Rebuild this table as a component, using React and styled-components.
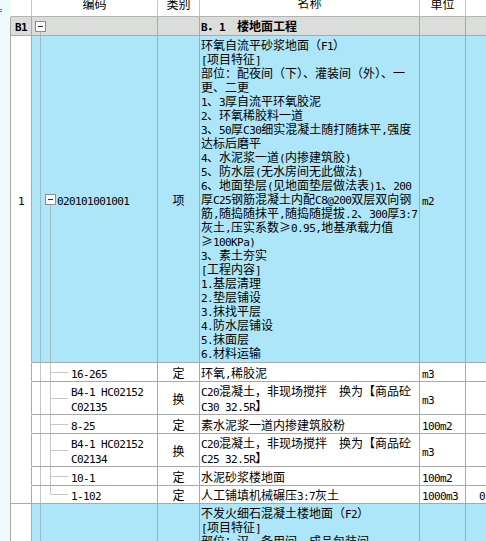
import React from "react";
import styled, { createGlobalStyle } from "styled-components";

const BLUE = "#ade6f8";
const GRAY = "#dbdddb";
const LINE = "#a9a9a9";
const GUIDE = "rgba(150,150,150,0.55)";

const GlobalStyle = createGlobalStyle`
  html, body { margin: 0; padding: 0; background: #fff; }
  body {
    width: 486px; height: 541px; overflow: hidden;
    font-family: "Noto Sans CJK SC", "Noto Sans", sans-serif;
    font-size: 12px; color: #000;
  }
`;

const Page = styled.div`
  display: flex;
  width: 486px;
  height: 541px;
  overflow: hidden;
`;

const Strip = styled.div`
  display: flex;
  flex-direction: column;
  width: 11px;
  flex: none;
  background: #eef9fb;
`;

const StripHead = styled.div`
  box-sizing: border-box;
  height: 17px;
  padding-top: 9px;
`;

const Grip = styled.div`
  width: 2px;
  height: 4px;
  background: repeating-linear-gradient(#6a7078 0 1px, transparent 1px 2px);
`;

const StripBody = styled.div`
  flex: 1;
  border-right: 1px solid #a3abaf;
`;

const Table = styled.div`
  flex: 1;
  min-width: 0;
  display: flex;
  flex-direction: column;
  overflow: hidden;
`;

const Row = styled.div`
  display: flex;
  flex: none;
  min-height: ${(p) => p.$min || 0}px;
  height: ${(p) => (p.$fixed ? `${p.$fixed}px` : "auto")};
`;

const bgFor = (tone) =>
  tone === "group" ? GRAY : tone === "item" ? BLUE : "#fff";

const Cell = styled.div`
  box-sizing: border-box;
  flex: none;
  display: flex;
  align-items: center;
  overflow: hidden;
  white-space: nowrap;
  border-right: 1px solid ${(p) => (p.$tone === "head" ? "#c4c4c4" : LINE)};
  border-bottom: 1px solid
    ${(p) => (p.$open ? "transparent" : p.$tone === "head" ? "#b4b4b4" : LINE)};
  background: ${(p) => bgFor(p.$tone)};
  justify-content: ${(p) => (p.$tone === "head" ? "center" : "flex-start")};
`;

const NumCell = styled(Cell)`
  width: 21px;
  justify-content: center;
  background: ${(p) => (p.$tone === "group" ? GRAY : "#fff")};
  font-weight: ${(p) => (p.$bold ? 700 : 400)};
`;

const guideLayers = {
  group: [`8px 100% / 1px 50%`],
  item: [`8px 0 / 1px 100%`, `18px 100% / 1px 50%`],
  sub: [`8px 0 / 1px 100%`, `18px 0 / 1px 100%`, `19px 50% / 17px 1px`],
  subLast: [`8px 0 / 1px 100%`, `18px 0 / 1px 50%`, `19px 50% / 17px 1px`],
  trunk: [`8px 0 / 1px 100%`],
};

const guides = (kind, tone) => {
  const layers = (guideLayers[kind] || []).map(
    (l) => `linear-gradient(${GUIDE}, ${GUIDE}) ${l} no-repeat`
  );
  return [...layers, bgFor(tone)].join(", ");
};

const CodeCell = styled(Cell)`
  width: 126px;
  padding-left: ${(p) => p.$indent || 0}px;
  background: ${(p) => guides(p.$guide, p.$tone)};
`;

const TypeCell = styled(Cell)`
  width: 42px;
  justify-content: center;
`;

const NameCell = styled(Cell)`
  width: 220px;
  padding: ${(p) => (p.$top ? "2px 1px" : "1px 1px")};
  align-items: ${(p) => (p.$top ? "flex-start" : "center")};
  justify-content: ${(p) => (p.$tone === "head" ? "center" : "flex-start")};
  font-weight: ${(p) => (p.$bold ? 700 : 400)};
`;

const UnitCell = styled(Cell)`
  width: 46px;
  padding-left: ${(p) => (p.$tone === "head" ? 0 : 2)}px;
`;

const ExtraCell = styled(Cell)`
  flex: 1;
  border-right: none;
  padding-left: 13px;
`;

const HeadLabel = styled.span`
  align-self: flex-end;
  line-height: 14px;
  padding-bottom: 5px;
`;

const Toggle = styled.span`
  box-sizing: border-box;
  flex: none;
  width: 11px;
  height: 11px;
  border: 1px solid #8e8e8e;
  background: #fafafa;
  display: inline-flex;
  align-items: center;
  justify-content: center;
  margin-right: ${(p) => p.$gap || 0}px;
  &::after {
    content: "";
    width: 5px;
    height: 1px;
    background: #303030;
  }
`;

const Lines = styled.div`
  line-height: ${(p) => p.$lh || 15}px;
  white-space: nowrap;
`;

const Line = styled.div`
  height: ${(p) => p.$lh || 15}px;
`;

const Latin = styled.span`
  font-family: "DejaVu Sans Mono", "Liberation Mono", monospace;
  font-size: 11px;
  letter-spacing: -0.6px;
  line-height: 0;
`;

function Mixed({ text }) {
  const parts = text.split(/([\x20-\x7e]+)/);
  return parts.map((p, i) =>
    i % 2 ? <Latin key={i}>{p}</Latin> : <React.Fragment key={i}>{p}</React.Fragment>
  );
}

function TextLines({ lines, lh = 15 }) {
  return (
    <Lines $lh={lh}>
      {lines.map((l, i) => (
        <Line key={i} $lh={lh}>
          <Mixed text={l} />
        </Line>
      ))}
    </Lines>
  );
}

const itemLines = [
  "环氧自流平砂浆地面（F1）",
  "[项目特征]",
  "部位：配夜间（下）、灌装间（外）、一",
  "更、二更",
  "1、3厚自流平环氧胶泥",
  "2、环氧稀胶料一道",
  "3、50厚C30细实混凝土随打随抹平,强度",
  "达标后磨平",
  "4、水泥浆一道(内掺建筑胶)",
  "5、防水层(无水房间无此做法)",
  "6、地面垫层(见地面垫层做法表)1、200",
  "厚C25钢筋混凝土内配C8@200双层双向钢",
  "筋,随捣随抹平,随捣随提拔.2、300厚3:7",
  "灰土,压实系数≥0.95,地基承载力值",
  "≥100KPa)",
  "3、素土夯实",
  "[工程内容]",
  "1.基层清理",
  "2.垫层铺设",
  "3.抹找平层",
  "4.防水层铺设",
  "5.抹面层",
  "6.材料运输",
];

const nextLines = [
  "不发火细石混凝土楼地面（F2）",
  "[项目特征]",
  "部位：汉、备用间、成品包装间",
  "1、面层材料",
];

const subs = [
  { code: ["16-265"], type: "定", name: ["环氧,稀胶泥"], unit: "m3" },
  {
    code: ["B4-1 HC02152", "C02135"],
    type: "换",
    name: ["C20混凝土，非现场搅拌　换为【商品砼", "C30 32.5R】"],
    unit: "m3",
  },
  { code: ["8-25"], type: "定", name: ["素水泥浆一道内掺建筑胶粉"], unit: "100m2" },
  {
    code: ["B4-1 HC02152", "C02134"],
    type: "换",
    name: ["C20混凝土，非现场搅拌　换为【商品砼", "C25 32.5R】"],
    unit: "m3",
  },
  { code: ["10-1"], type: "定", name: ["水泥砂浆楼地面"], unit: "100m2" },
  {
    code: ["1-102"],
    type: "定",
    name: ["人工铺填机械碾压3:7灰土"],
    unit: "1000m3",
    extra: "0",
  },
];

export default function App() {
  return (
    <>
      <GlobalStyle />
      <Page>
        <Strip>
          <StripHead>
            <Grip />
          </StripHead>
          <StripBody />
        </Strip>
        <Table>
          <Row $fixed={17}>
            <NumCell $tone="head" />
            <CodeCell $tone="head">
              <HeadLabel>编码</HeadLabel>
            </CodeCell>
            <TypeCell $tone="head">
              <HeadLabel>类别</HeadLabel>
            </TypeCell>
            <NameCell $tone="head">
              <HeadLabel>名称</HeadLabel>
            </NameCell>
            <UnitCell $tone="head" style={{ justifyContent: "center" }}>
              <HeadLabel>单位</HeadLabel>
            </UnitCell>
            <ExtraCell $tone="head" />
          </Row>

          <Row $fixed={19}>
            <NumCell $tone="group" $bold>
              <TextLines lines={["B1"]} lh={16} />
            </NumCell>
            <CodeCell $tone="group" $indent={3} $guide="group">
              <Toggle />
            </CodeCell>
            <TypeCell $tone="group" />
            <NameCell $tone="group" $bold>
              <TextLines lines={["B．1　楼地面工程"]} lh={16} />
            </NameCell>
            <UnitCell $tone="group" />
            <ExtraCell $tone="group" />
          </Row>

          <Row>
            <NumCell $tone="item" $open>
              <TextLines lines={["1"]} />
            </NumCell>
            <CodeCell $tone="item" $indent={13} $guide="item">
              <Toggle $gap={1} />
              <TextLines lines={["020101001001"]} />
            </CodeCell>
            <TypeCell $tone="item">项</TypeCell>
            <NameCell $tone="item" $top>
              <TextLines lines={itemLines} lh={14} />
            </NameCell>
            <UnitCell $tone="item">
              <TextLines lines={["m2"]} />
            </UnitCell>
            <ExtraCell $tone="item" />
          </Row>

          {subs.map((s, i) => {
            const last = i === subs.length - 1;
            return (
              <Row key={i} $min={last ? 18 : 19}>
                <NumCell $tone="sub" $open={!last} />
                <CodeCell
                  $tone="sub"
                  $indent={39}
                  $guide={last ? "subLast" : "sub"}
                >
                  <TextLines lines={s.code} />
                </CodeCell>
                <TypeCell $tone="sub">{s.type}</TypeCell>
                <NameCell $tone="sub">
                  <TextLines lines={s.name} />
                </NameCell>
                <UnitCell $tone="sub">
                  <TextLines lines={[s.unit]} />
                </UnitCell>
                <ExtraCell $tone="sub">
                  {s.extra ? <TextLines lines={[s.extra]} /> : null}
                </ExtraCell>
              </Row>
            );
          })}

          <Row>
            <NumCell $tone="item" $open />
            <CodeCell $tone="item" $guide="trunk" />
            <TypeCell $tone="item" />
            <NameCell $tone="item" $top>
              <TextLines lines={nextLines} lh={14} />
            </NameCell>
            <UnitCell $tone="item" />
            <ExtraCell $tone="item" />
          </Row>
        </Table>
      </Page>
    </>
  );
}
